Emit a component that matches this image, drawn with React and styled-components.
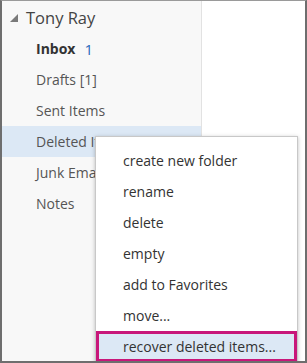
import styled, { createGlobalStyle } from 'styled-components';

const GlobalStyle = createGlobalStyle`
  html, body {
    margin: 0;
    padding: 0;
    background: #fff;
  }
  body {
    font-family: "Open Sans", "Noto Sans", sans-serif;
  }
`;

const folders = [
  { name: 'Inbox', count: '1', bold: true },
  { name: 'Drafts [1]' },
  { name: 'Sent Items' },
  { name: 'Deleted Items', selected: true },
  { name: 'Junk Email' },
  { name: 'Notes' },
];

const menuItems = [
  'create new folder',
  'rename',
  'delete',
  'empty',
  'add to Favorites',
  'move...',
  'recover deleted items...',
];

const App = () => {
  return (
    <>
      <GlobalStyle />
      <StFrame>
        <StPane>
          <StAccount>
            <StCaret viewBox="0 0 8 8">
              <polygon points="8,0 8,8 0,8" fill="#7a7a7a" />
            </StCaret>
            Tony Ray
          </StAccount>
          {folders.map((f) => (
            <StFolder key={f.name} $selected={f.selected} $bold={f.bold}>
              {f.name}
              {f.count && <StCount>{f.count}</StCount>}
            </StFolder>
          ))}
        </StPane>
        <StContent />
        <StMenu>
          {menuItems.map((item, i) => (
            <StMenuItem key={item} $active={i === menuItems.length - 1}>
              {item}
            </StMenuItem>
          ))}
        </StMenu>
      </StFrame>
    </>
  );
};
export default App;

const StFrame = styled.div`
  position: relative;
  display: flex;
  width: 307px;
  height: 363px;
  box-sizing: border-box;
  border-top: 1px solid #9a9a9a;
  border-left: 2px solid #6e6e6e;
  border-right: 2px solid #6e6e6e;
  border-bottom: 2px solid #6e6e6e;
  overflow: hidden;
`;

const StPane = styled.div`
  display: flex;
  flex-direction: column;
  width: 199px;
  background: #f8f8f8;
  border-right: 1px solid #e2e2e2;
  box-shadow: 1px 0 2px rgba(0, 0, 0, 0.06);
`;

const StContent = styled.div`
  flex: 1;
  background: #fff;
`;

const StAccount = styled.div`
  display: flex;
  align-items: center;
  gap: 8px;
  height: 32px;
  padding-left: 8px;
  font-size: 16.5px;
  color: #444;
`;

const StCaret = styled.svg`
  width: 8px;
  height: 8px;
  margin-top: 1px;
`;

const StFolder = styled.div`
  display: flex;
  align-items: center;
  height: 31px;
  padding-left: 34px;
  font-size: 14px;
  white-space: nowrap;
  color: ${(p) => (p.$bold ? '#333' : '#555')};
  font-weight: ${(p) => (p.$bold ? 700 : 400)};
  background: ${(p) => (p.$selected ? '#dce8f5' : 'transparent')};
`;

const StCount = styled.span`
  margin-left: 9px;
  font-size: 15px;
  color: #2a68b8;
  font-weight: 400;
`;

const StMenu = styled.div`
  position: absolute;
  left: 93px;
  top: 135px;
  bottom: -12px;
  width: 201px;
  padding-top: 8px;
  background: #fff;
  border: 1px solid #c8c8c8;
  box-shadow: 0 1px 4px rgba(0, 0, 0, 0.25);
`;

const StMenuItem = styled.div`
  display: flex;
  align-items: center;
  height: 31px;
  box-sizing: border-box;
  padding-left: ${(p) => (p.$active ? '24px' : '27px')};
  font-size: 14px;
  color: #333;
  white-space: nowrap;
  background: ${(p) => (p.$active ? '#dce8f5' : 'transparent')};
  border: ${(p) => (p.$active ? '3px solid #c8177a' : 'none')};
`;
